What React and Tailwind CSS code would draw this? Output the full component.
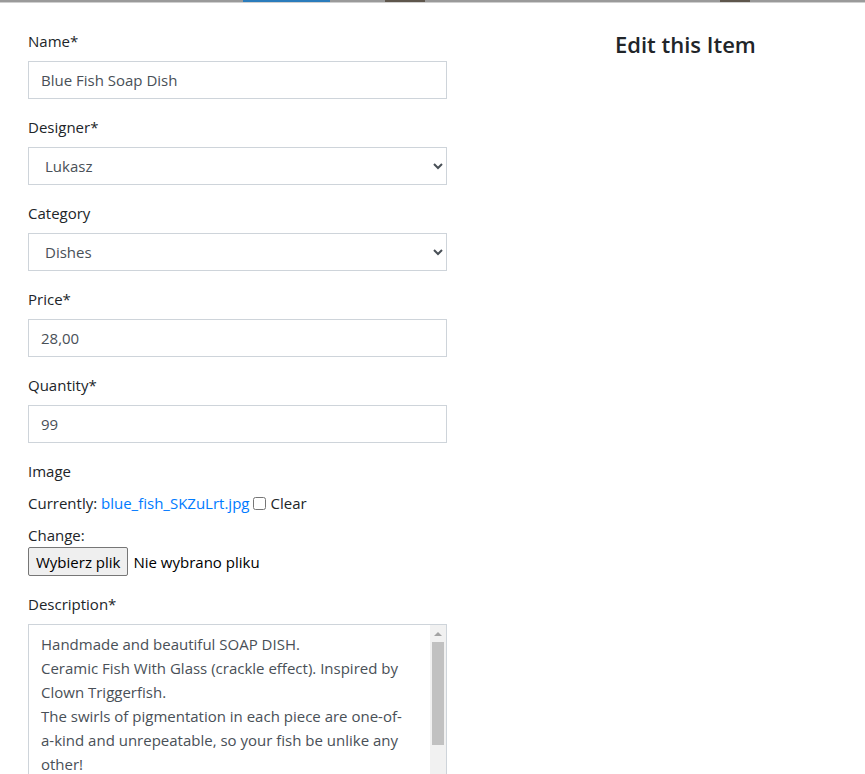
import { useState } from 'react';

const font = { fontFamily: '"Open Sans", "Noto Sans", sans-serif' };

function Field({ label, children }) {
  return (
    <div className="mb-4">
      <label className="block mb-2 text-[15px] leading-6 text-[#212529]">{label}</label>
      {children}
    </div>
  );
}

const inputCls =
  'block w-full h-[38px] px-3 border border-[#ced4da] rounded-none bg-white text-[15px] text-[#495057] outline-none';

const description =
  'Handmade and beautiful SOAP DISH.\nCeramic Fish With Glass (crackle effect). Inspired by\nClown Triggerfish.\nThe swirls of pigmentation in each piece are one-of-\na-kind and unrepeatable, so your fish be unlike any\nother!\nEach piece is unique and made by hand.';

export default function App() {
  const [name, setName] = useState('Blue Fish Soap Dish');
  const [price, setPrice] = useState('28,00');
  const [qty, setQty] = useState('99');

  return (
    <div className="min-h-screen bg-white" style={font}>
      {/* Header image edge */}
      <div className="flex h-[2px] bg-[#9a9a9a]">
        <div className="w-[243px]" />
        <div className="w-[87px] bg-[#2b7cbc]" />
        <div className="w-[55px]" />
        <div className="w-[40px] bg-[#5e564c]" />
        <div className="w-[295px]" />
        <div className="w-[30px] bg-[#5e564c]" />
      </div>
      <div className="h-[1px] bg-[#cfcfcf]" />

      <div className="flex pt-[26px]">
        <form className="w-[419px] ml-[28px] shrink-0" onSubmit={(e) => e.preventDefault()}>
          <Field label="Name*">
            <input className={inputCls} value={name} onChange={(e) => setName(e.target.value)} />
          </Field>

          <Field label="Designer*">
            <select className={`${inputCls} px-[12px]`} defaultValue="Lukasz">
              <option>Lukasz</option>
            </select>
          </Field>

          <Field label="Category">
            <select className={`${inputCls} px-[12px]`} defaultValue="Dishes">
              <option>Dishes</option>
            </select>
          </Field>

          <Field label="Price*">
            <input className={inputCls} value={price} onChange={(e) => setPrice(e.target.value)} />
          </Field>

          <Field label="Quantity*">
            <input className={inputCls} value={qty} onChange={(e) => setQty(e.target.value)} />
          </Field>

          <div className="mb-4 text-[15px] leading-6 text-[#212529]">
            <label className="block mb-2">Image</label>
            <div className="flex items-center">
              Currently:&nbsp;<a href="#" className="text-[#007bff]">blue_fish_SKZuLrt.jpg</a>
              <input type="checkbox" className="ml-[4px] mr-[4px] w-[13px] h-[13px]" />
              <span>Clear</span>
            </div>
            <div className="mt-2">Change:</div>
            <div className="flex items-center">
              <span className="inline-flex items-center h-[29px] px-[7px] border border-[#767676] rounded-[2px] bg-[#efefef] text-[#000]">
                Wybierz plik
              </span>
              <span className="ml-[5px] text-[#000]">Nie wybrano pliku</span>
            </div>
          </div>

          <Field label="Description*">
            <div className="flex h-[160px] border border-[#ced4da] bg-white">
              <textarea
                className="block flex-1 h-full px-3 py-[7px] text-[15px] leading-6 text-[#495057] resize-none overflow-hidden outline-none"
                wrap="off"
                defaultValue={description}
              />
              {/* scrollbar */}
              <div className="w-[16px] flex flex-col items-center bg-[#f1f1f1]">
                <div className="h-[17px] flex items-center justify-center">
                  <div className="w-0 h-0 border-l-[4px] border-r-[4px] border-b-[4px] border-l-transparent border-r-transparent border-b-[#a3a3a3]" />
                </div>
                <div className="w-[12px] h-[103px] bg-[#c1c1c1]" />
              </div>
            </div>
          </Field>
        </form>

        <div className="pl-[168px]">
          <h4 className="text-[22px] leading-[30px] font-semibold text-[#212529]">Edit this Item</h4>
        </div>
      </div>
    </div>
  );
}
